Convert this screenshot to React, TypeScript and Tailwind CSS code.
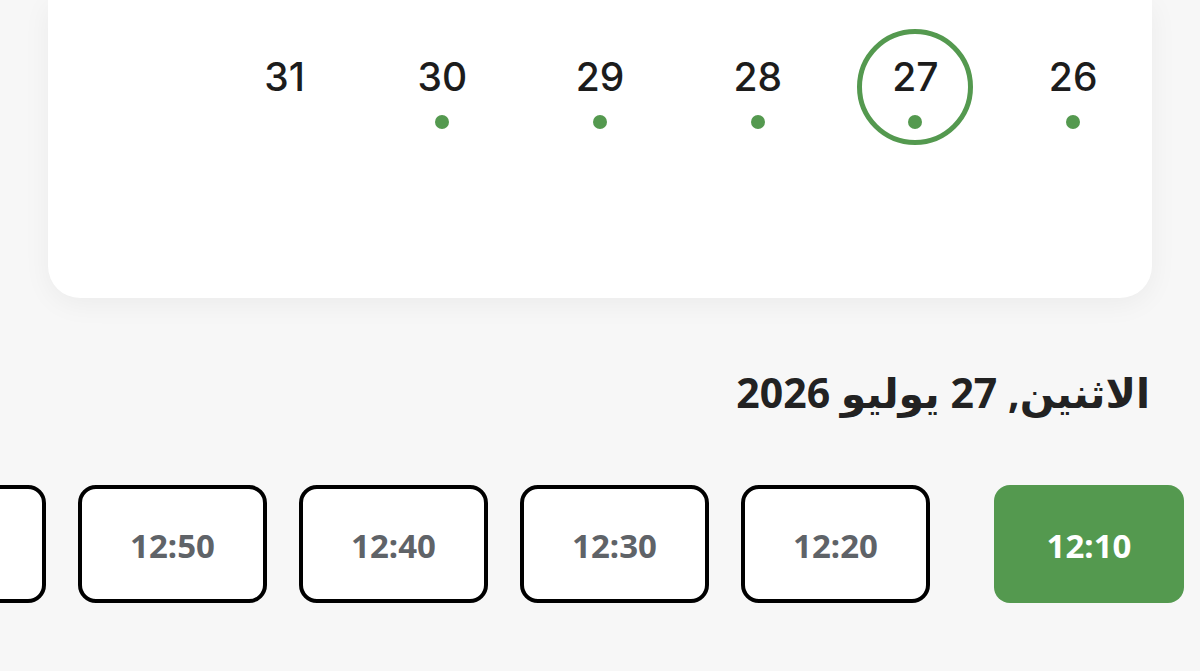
import React from "react";

const days = [
  { n: "26", dot: true },
  { n: "27", dot: true, sel: true },
  { n: "28", dot: true },
  { n: "29", dot: true },
  { n: "30", dot: true },
  { n: "31", dot: false },
  { n: "", dot: false },
];

const times = ["12:10", "12:20", "12:30", "12:40", "12:50", ""];

export default function App() {
  return (
    <div className="w-[1200px] h-[671px] overflow-hidden bg-[#f7f7f7] flex flex-col">
      <div className="mx-[48px] h-[298px] shrink-0 bg-white rounded-b-[32px] shadow-[0_6px_28px_rgba(0,0,0,0.05)] pt-[29px]">
        <div dir="rtl" className="grid grid-cols-7">
          {days.map((d, i) => (
            <div key={i} className="flex justify-center">
              <div
                className={
                  "relative w-[116px] h-[116px] rounded-full " +
                  (d.sel ? "border-[5px] border-[#54994f]" : "")
                }
              >
                <div
                  className="absolute left-0 right-0 text-center text-[39px] leading-[44px] font-medium text-[#1c1c1c]"
                  style={{ fontFamily: 'Inter, "Liberation Sans", Arial, sans-serif', top: d.sel ? 21 : 26 }}
                >
                  {d.n}
                </div>
                {d.dot && (
                  <div
                    className="absolute left-1/2 -translate-x-1/2 w-[14px] h-[14px] rounded-full bg-[#54994f]"
                    style={{ top: d.sel ? 81 : 86 }}
                  />
                )}
              </div>
            </div>
          ))}
        </div>
      </div>

      <div
        dir="rtl"
        className="mt-[66px] pr-[50px] text-[41px] leading-[56px] font-bold text-[#222222]"
        style={{ fontFamily: '"Noto Sans", "DejaVu Sans", sans-serif' }}
      >
        الاثنين, 27 يوليو 2026
      </div>

      <div dir="rtl" className="mt-[65px] flex pr-[16px] gap-[32px] overflow-hidden">
        {times.map((t, i) => (
          <div
            key={i}
            className={
              "shrink-0 h-[118px] flex items-center justify-center text-[33px] font-bold " +
              (i === 0
                ? "w-[190px] bg-[#54994f] text-white rounded-[16px] ml-[32px]"
                : "w-[189px] bg-white border-[4px] border-black rounded-[18px] text-[#5f6368]")
            }
            style={{ fontFamily: '"Noto Sans", "Open Sans", sans-serif' }}
          >
            {t && <span className="pt-[4px]">{t}</span>}
          </div>
        ))}
      </div>
    </div>
  );
}
